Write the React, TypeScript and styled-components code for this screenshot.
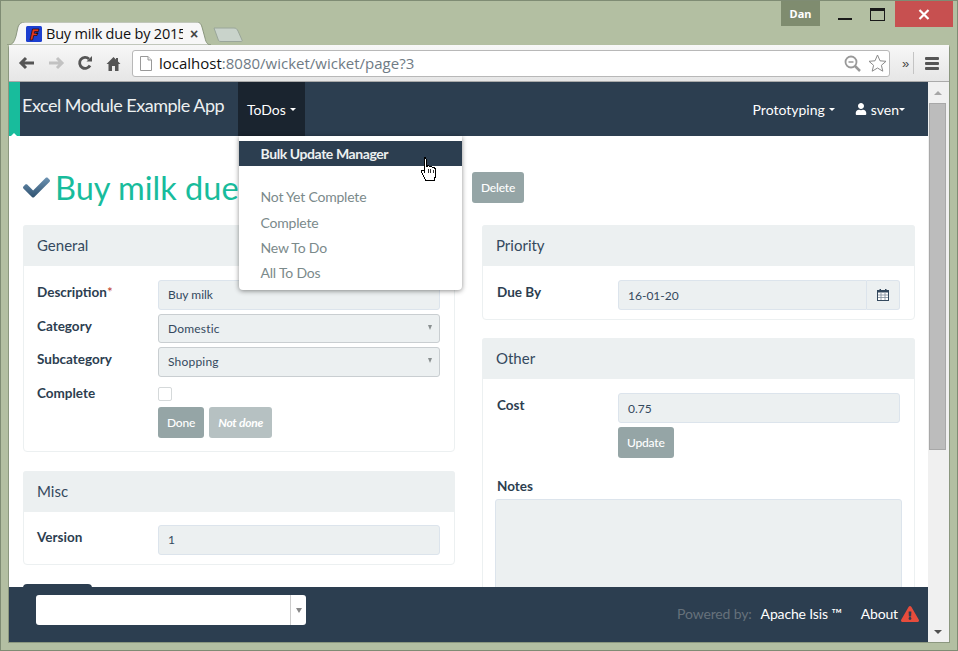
import React from 'react'
import styled, { createGlobalStyle } from 'styled-components'
import { FaExclamationTriangle, FaUser } from 'react-icons/fa'

const Global = createGlobalStyle`
	html, body {
		margin: 0;
		padding: 0;
		background: #b3bfa2;
	}
	* {
		box-sizing: border-box;
	}
`

const Frame = styled.div`
	width: 958px;
	height: 651px;
	overflow: hidden;
	display: flex;
	flex-direction: column;
	background: #b3bfa2;
	border: 1px solid #7f8c74;
	font-family: Lato, 'Liberation Sans', sans-serif;
	color: #2c3e50;
`

const TitleBar = styled.div`
	height: 44px;
	flex: none;
	display: flex;
	justify-content: space-between;
	padding: 0 4px 0 5px;
`

const TabStrip = styled.div`
	display: flex;
	align-items: flex-end;
`

const Tab = styled.div`
	position: relative;
	width: 205px;
	height: 23px;
	display: flex;
	align-items: center;
	padding: 0 0 0 20px;
	font-size: 14.5px;
	letter-spacing: -0.2px;
	color: #111;
	font-family: 'Open Sans', Lato, sans-serif;
`

const TabShape = styled.svg`
	position: absolute;
	left: 0;
	top: 0;
`

const TabTitle = styled.span`
	position: relative;
	margin-left: 4px;
	width: 137px;
	overflow: hidden;
	white-space: nowrap;
`

const TabClose = styled.span`
	position: relative;
	margin-left: 7px;
	font-size: 14px;
	font-weight: 700;
	color: #444;
	font-family: 'Liberation Sans', sans-serif;
`

const NewTab = styled.svg`
	margin: 0 0 3px 2px;
`

const WindowControls = styled.div`
	display: flex;
	align-items: flex-start;
`

const UserBadge = styled.div`
	width: 39px;
	height: 25px;
	margin-right: 8px;
	background: #7f8c6f;
	color: #fff;
	font-size: 11px;
	font-weight: 700;
	font-family: 'Noto Sans', sans-serif;
	text-align: center;
	line-height: 25px;
`

const ControlButton = styled.div<{ $close?: boolean }>`
	width: ${(p) => (p.$close ? '58px' : '33px')};
	height: 26px;
	margin-left: ${(p) => (p.$close ? '1px' : '0')};
	display: flex;
	align-items: center;
	justify-content: center;
	background: ${(p) => (p.$close ? '#c75050' : 'transparent')};
`

const Browser = styled.div`
	flex: 1;
	min-height: 0;
	margin: 0 7px 7px;
	display: flex;
	flex-direction: column;
	border: 1px solid #8b977f;
	border-top: none;
	border-radius: 3px 3px 0 0;
	background: #fff;
`

const Toolbar = styled.div`
	height: 37px;
	flex: none;
	display: flex;
	align-items: center;
	padding: 0 9px 0 9px;
	background: linear-gradient(#f7f7f7, #e6e6e6);
	border-bottom: 1px solid #aaa;
`

const NavIcon = styled.svg<{ $gap: number }>`
	flex: none;
	margin-right: ${(p) => p.$gap}px;
`

const Omnibox = styled.div`
	width: 758px;
	height: 27px;
	display: flex;
	align-items: center;
	gap: 7px;
	padding: 0 2px 0 7px;
	background: #fff;
	border: 1px solid #b8b8b8;
	border-radius: 3px;
	font-family: 'Open Sans', Lato, sans-serif;
	font-size: 15px;
	color: #111;
`

const UrlRest = styled.span`
	color: #6f7b85;
`

const Url = styled.div`
	flex: 1;
	white-space: nowrap;
`

const Chevrons = styled.span`
	margin-left: 12px;
	width: 9px;
	font-size: 13px;
	color: #444;
	font-family: 'Liberation Sans', sans-serif;
`

const ToolbarRule = styled.span`
	width: 1px;
	height: 22px;
	margin-left: 2px;
	background: #c4c4c4;
`

const MenuBars = styled.div`
	margin-left: 11px;
	width: 14px;
	height: 13px;
	display: flex;
	flex-direction: column;
	justify-content: space-between;
	span {
		height: 3px;
		background: #555;
		border-radius: 1px;
	}
`

const Viewport = styled.div`
	flex: 1;
	min-height: 0;
	display: flex;
`

const Page = styled.div`
	position: relative;
	flex: 1;
	min-width: 0;
	display: flex;
	flex-direction: column;
`

const Navbar = styled.div`
	height: 54px;
	flex: none;
	display: flex;
	align-items: stretch;
	background: #2c3e50;
	color: #fff;
`

const AccentStrip = styled.div`
	position: relative;
	width: 11px;
	flex: none;
	background: #18bc9c;
	&::after {
		content: '';
		position: absolute;
		left: 2px;
		bottom: 0;
		border-left: 3.5px solid transparent;
		border-right: 3.5px solid transparent;
		border-bottom: 3.5px solid #fff;
	}
`

const Brand = styled.div`
	width: 218px;
	flex: none;
	padding: 0 0 0 2px;
	font-size: 18px;
	letter-spacing: -0.5px;
	line-height: 47px;
	white-space: nowrap;
	color: #ecf0f1;
`

const NavItem = styled.div<{ $active?: boolean }>`
	display: flex;
	align-items: center;
	gap: 4px;
	padding: 0 9px;
	font-size: 14px;
	background: ${(p) => (p.$active ? '#1a242f' : 'transparent')};
`

const Caret = styled.span<{ $tight?: boolean }>`
	width: 0;
	height: 0;
	margin-left: ${(p) => (p.$tight ? '-4px' : '0')};
	border-top: 3.5px solid #fff;
	border-left: 3.5px solid transparent;
	border-right: 3.5px solid transparent;
`

const NavRight = styled.div`
	margin-left: auto;
	display: flex;
	padding-right: 14px;
	gap: 2px;
`

const Dropdown = styled.div`
	position: absolute;
	left: 230px;
	top: 54px;
	width: 223px;
	height: 154px;
	padding-top: 5px;
	background: #fff;
	border-radius: 0 0 4px 4px;
	box-shadow: 0 1px 5px rgba(0, 0, 0, 0.45);
	font-size: 14px;
	z-index: 3;
`

const DropItem = styled.div<{ $active?: boolean }>`
	height: 25.3px;
	line-height: 25px;
	padding-left: 21.5px;
	font-weight: ${(p) => (p.$active ? 700 : 400)};
	letter-spacing: ${(p) => (p.$active ? '-0.42px' : '-0.2px')};
	background: ${(p) => (p.$active ? '#2c3e50' : 'transparent')};
	color: ${(p) => (p.$active ? '#ecf0f1' : '#7b8a8b')};
`

const DropDivider = styled.div`
	height: 18px;
`

const Pointer = styled.svg`
	position: absolute;
	left: 412px;
	top: 75px;
	z-index: 4;
`

const Main = styled.div`
	flex: 1;
	min-height: 0;
	overflow: hidden;
	padding: 36px 13px 0 14px;
`

const TitleRow = styled.div`
	height: 31px;
	margin-bottom: 22px;
	display: flex;
	align-items: center;
`

const Title = styled.h1`
	margin: 0 12px 0 5px;
	width: 405px;
	overflow: hidden;
	font-size: 32.5px;
	font-weight: 400;
	line-height: 36px;
	white-space: nowrap;
	color: #18bc9c;
`

const Button = styled.div<{ $muted?: boolean; $italic?: boolean }>`
	height: 31px;
	display: inline-flex;
	align-items: center;
	padding: 0 9px;
	border-radius: 3px;
	font-size: 12px;
	letter-spacing: -0.2px;
	font-weight: ${(p) => (p.$italic ? 700 : 500)};
	font-style: ${(p) => (p.$italic ? 'italic' : 'normal')};
	color: #fff;
	background: ${(p) => (p.$muted ? '#b6c1c2' : '#95a5a6')};
`

const Columns = styled.div`
	display: grid;
	grid-template-columns: 432px 433px;
	column-gap: 27px;
	align-items: start;
`

const Column = styled.div`
	display: flex;
	flex-direction: column;
`

const Panel = styled.div<{ $gap: number }>`
	margin-bottom: ${(p) => p.$gap}px;
	border: 1px solid #ecf0f1;
	border-radius: 4px;
`

const PanelHeading = styled.div`
	height: 41px;
	margin: -1px -1px 0;
	padding-left: 14px;
	background: #ecf0f1;
	border-radius: 3px 3px 0 0;
	font-size: 15px;
	line-height: 41px;
	color: #34495e;
`

const PanelBody = styled.div<{ $right?: boolean; $top?: number; $bottom?: number }>`
	padding: ${(p) => p.$top ?? 14}px 14px ${(p) => p.$bottom ?? 9}px
		${(p) => (p.$right ? 14 : 13)}px;
	display: flex;
	flex-direction: column;
	gap: 4px;
`

const Row = styled.div`
	display: grid;
	grid-template-columns: 121px 1fr;
`

const Label = styled.div`
	padding-top: 2px;
	font-size: 13.5px;
	font-weight: 700;
	line-height: 20px;
	color: #2c3e50;
`

const Required = styled.span`
	color: #c0392b;
	font-weight: 400;
`

const Input = styled.div<{ $height?: number; $addon?: boolean }>`
	height: ${(p) => p.$height ?? 30}px;
	display: flex;
	align-items: center;
	padding-left: 9px;
	background: #ecf0f1;
	border: 1px solid #dce4ec;
	border-radius: ${(p) => (p.$addon ? '3px 0 0 3px' : '3px')};
	font-size: 12px;
	color: #34495e;
`

const Select = styled(Input)`
	position: relative;
	border-color: #c9ced1;
	letter-spacing: 0.2px;
	&::after {
		content: '';
		position: absolute;
		right: 7px;
		top: 10px;
		border-top: 5px solid #8a9091;
		border-left: 2.5px solid transparent;
		border-right: 2.5px solid transparent;
	}
`

const InputGroup = styled.div`
	display: grid;
	grid-template-columns: 1fr 33px;
`

const Addon = styled.div`
	display: flex;
	align-items: center;
	justify-content: center;
	background: #ecf0f1;
	border: 1px solid #dce4ec;
	border-left: none;
	border-radius: 0 3px 3px 0;
`

const Checkbox = styled.div`
	width: 14px;
	height: 14px;
	margin-top: 6.5px;
	border: 1px solid #d5d9da;
	border-radius: 2px;
	background: #fff;
`

const ButtonRow = styled.div`
	display: flex;
	gap: 5px;
	margin-top: 5.5px;
`

const Stack = styled.div`
	display: flex;
	flex-direction: column;
`

const UpdateRow = styled.div`
	display: flex;
	margin-top: 4px;
`

const NotesLabel = styled(Label)`
	margin-top: 14px;
	padding-top: 0;
`

const Notes = styled.div`
	height: 140px;
	margin: 3px -2px 0 -2px;
	background: #ecf0f1;
	border: 1px solid #dce4ec;
	border-radius: 3px;
`

const HiddenTab = styled.div`
	width: 69px;
	height: 8px;
	background: #2c3e50;
	border-radius: 4px 4px 0 0;
`

const Footer = styled.div`
	height: 55px;
	flex: none;
	display: flex;
	align-items: flex-start;
	padding: 8px 9px 0 27px;
	background: #2c3e50;
	font-size: 14px;
	letter-spacing: -0.15px;
	color: #fff;
`

const FooterSelect = styled.div`
	width: 270px;
	height: 30px;
	display: flex;
	justify-content: flex-end;
	background: #fff;
	border-radius: 3px;
`

const SelectArrow = styled.div`
	width: 16px;
	display: flex;
	align-items: center;
	justify-content: center;
	border-left: 1px solid #ccc;
	&::after {
		content: '';
		border-top: 5px solid #888;
		border-left: 3px solid transparent;
		border-right: 3px solid transparent;
	}
`

const FooterLinks = styled.div`
	margin-left: auto;
	height: 37px;
	display: flex;
	align-items: center;
`

const Powered = styled.span`
	color: #66717b;
	margin-right: 9px;
`

const About = styled.span`
	margin-left: 19px;
	margin-right: 3px;
`

const Scrollbar = styled.div`
	width: 21px;
	flex: none;
	display: flex;
	flex-direction: column;
	align-items: center;
	padding: 0 3px 0 1px;
	background: #f0f0f0;
`

const ScrollArrow = styled.div<{ $down?: boolean }>`
	height: 21px;
	width: 100%;
	flex: none;
	display: flex;
	align-items: center;
	justify-content: center;
	margin-top: ${(p) => (p.$down ? 'auto' : '0')};
	&::after {
		content: '';
		border-left: 4px solid transparent;
		border-right: 4px solid transparent;
		${(p) =>
			p.$down ? 'border-top: 4px solid #505050;' : 'border-bottom: 4px solid #a6a6a6;'}
	}
`

const ScrollThumb = styled.div`
	width: 17px;
	height: 347px;
	background: #bcbcbc;
	border: 1px solid #a8a8a8;
`

const FaviconSvg = styled.svg`
	position: relative;
	flex: none;
`

const CHECK_PATH =
	'M173.898 439.404l-166.4-166.4c-9.997-9.997-9.997-26.206 0-36.204l36.203-36.204c9.997-9.998 26.207-9.998 36.204 0L192 312.69 432.095 72.596c9.997-9.997 26.207-9.997 36.204 0l36.203 36.204c9.997 9.997 9.997 26.206 0 36.204l-294.4 294.401c-9.998 9.997-26.207 9.997-36.204-.001z'

const CheckIcon = () => (
	<svg width="27" height="27" viewBox="0 0 512 512">
		<defs>
			<linearGradient id="check" x1="0" y1="0" x2="0" y2="1">
				<stop offset="0" stopColor="#6d93b3" />
				<stop offset="1" stopColor="#2f5270" />
			</linearGradient>
		</defs>
		<path d={CHECK_PATH} fill="url(#check)" />
	</svg>
)

const Favicon = () => (
	<FaviconSvg width="16" height="16" viewBox="0 0 16 16">
		<rect width="16" height="16" rx="1.5" fill="#1c3fd0" />
		<path d="M4 14 L6.5 3 H13 L12.4 5.5 H8.6 L8.2 7.2 H11.6 L11 9.5 H7.7 L6.6 14 Z" fill="#e2361d" stroke="#220a06" strokeWidth="0.7" />
		<rect x="10.2" y="6.6" width="2" height="1.4" fill="#111" />
	</FaviconSvg>
)

const CalendarIcon = () => (
	<svg width="12" height="12" viewBox="0 0 12 12">
		<rect x="0.5" y="1.5" width="11" height="10" fill="#fff" stroke="#34495e" />
		<rect x="0.5" y="1.5" width="11" height="2" fill="#34495e" />
		<path d="M4 4v7M8 4v7M1 6h10M1 8.5h10" stroke="#7d8b99" strokeWidth="0.8" />
		<rect x="2.5" y="0" width="1.5" height="3" fill="#34495e" />
		<rect x="8" y="0" width="1.5" height="3" fill="#34495e" />
	</svg>
)

const App = () => (
	<>
		<Global />
		<Frame>
			<TitleBar>
				<TabStrip>
					<Tab>
						<TabShape width="205" height="23" viewBox="0 0 205 23">
							<path d="M1 23 C6 23 8 21 10 14 L12 5 C13 2 15 0 19 0 H190 C194 0 195 2 196 5 L199 16 C200 21 202 23 205 23 Z" fill="#f7f7f7" stroke="#8b977f" />
						</TabShape>
						<Favicon />
						<TabTitle>Buy milk due by 2015</TabTitle>
						<TabClose>×</TabClose>
					</Tab>
					<NewTab width="31" height="15" viewBox="0 0 31 15">
						<path d="M1 1 H21 C23 1 24 2 25 4 L29 13 C29.500 14 29 14.500 28 14.500 H8 C6 14.500 5.500 14 5 12 Z" fill="#c9d3cb" stroke="#9aa69a" />
					</NewTab>
				</TabStrip>
				<WindowControls>
					<UserBadge>Dan</UserBadge>
					<ControlButton>
						<svg width="14" height="14" viewBox="0 0 14 14">
							<rect x="0" y="11" width="14" height="2" fill="#1a1a1a" />
						</svg>
					</ControlButton>
					<ControlButton>
						<svg width="15" height="13" viewBox="0 0 15 13">
							<rect x="0.5" y="0.5" width="14" height="12" fill="none" stroke="#1a1a1a" />
							<rect x="0" y="0" width="15" height="3" fill="#1a1a1a" />
						</svg>
					</ControlButton>
					<ControlButton $close>
						<svg width="12" height="11" viewBox="0 0 12 11">
							<path d="M1.500 1 L10.500 10 M10.500 1 L1.500 10" stroke="#fff" strokeWidth="2.200" />
						</svg>
					</ControlButton>
				</WindowControls>
			</TitleBar>
			<Browser>
				<Toolbar>
					<NavIcon $gap={12.5} width="17" height="14" viewBox="0 0 17 14">
						<path d="M16 7 H4 M8 2 L3 7 L8 12" fill="none" stroke="#555" strokeWidth="3" />
					</NavIcon>
					<NavIcon $gap={12.5} width="17" height="14" viewBox="0 0 17 14">
						<path d="M1 7 H13 M9 2 L14 7 L9 12" fill="none" stroke="#c2c2c2" strokeWidth="3" />
					</NavIcon>
					<NavIcon $gap={13} width="16" height="16" viewBox="0 0 16 16">
						<path d="M13 10.500 A5.500 5.500 0 1 1 12 4" fill="none" stroke="#555" strokeWidth="2.800" />
						<path d="M9.500 6.500 H15 V1 Z" fill="#555" />
					</NavIcon>
					<NavIcon $gap={11} width="15" height="15" viewBox="0 0 15 15">
						<path d="M7.500 1 L0.500 8 H2.500 V15 H6 V10 H9 V15 H12.500 V8 H14.500 L12 5.500 V2 H10 V3.500 Z" fill="#555" />
					</NavIcon>
					<Omnibox>
						<svg width="12" height="15" viewBox="0 0 12 15">
							<path d="M0.500 0.500 H8 L11.500 4 V14.500 H0.500 Z" fill="#fff" stroke="#999" />
							<path d="M8 0.500 V4 H11.500" fill="#eee" stroke="#999" />
						</svg>
						<Url>
							localhost<UrlRest>:8080/wicket/wicket/page?3</UrlRest>
						</Url>
						<svg width="17" height="17" viewBox="0 0 17 17">
							<circle cx="7" cy="7" r="5.500" fill="none" stroke="#999" strokeWidth="1.800" />
							<path d="M4.500 7 H9.500" stroke="#999" strokeWidth="1.500" />
							<path d="M11 11 L16 16" stroke="#999" strokeWidth="2.500" />
						</svg>
						<svg width="19" height="18" viewBox="0 0 19 18">
							<path d="M9.500 1 L12 6.800 L18 7.300 L13.400 11.300 L14.800 17.200 L9.500 14 L4.200 17.200 L5.600 11.300 L1 7.300 L7 6.800 Z" fill="#fff" stroke="#8a8a8a" />
						</svg>
					</Omnibox>
					<Chevrons>»</Chevrons>
					<ToolbarRule />
					<MenuBars>
						<span />
						<span />
						<span />
					</MenuBars>
				</Toolbar>
				<Viewport>
					<Page>
						<Navbar>
							<AccentStrip />
							<Brand>Excel Module Example App</Brand>
							<NavItem $active>
								ToDos <Caret />
							</NavItem>
							<NavRight>
								<NavItem>
									Prototyping <Caret />
								</NavItem>
								<NavItem>
									<FaUser size={12} /> <span>sven</span>
									<Caret $tight />
								</NavItem>
							</NavRight>
						</Navbar>
						<Dropdown>
							<DropItem $active>Bulk Update Manager</DropItem>
							<DropDivider />
							<DropItem>Not Yet Complete</DropItem>
							<DropItem>Complete</DropItem>
							<DropItem>New To Do</DropItem>
							<DropItem>All To Dos</DropItem>
						</Dropdown>
						<Pointer width="16" height="25" viewBox="0 0 16 25" shapeRendering="crispEdges">
							<path d="M3 1.500 C3 0.500 5 0.500 5 1.500 V10 L6.500 9 C7 8.500 8.500 8.500 8.500 10 C9 9 11 9 11 10.500 C11.500 10 13.500 10 13.500 11.500 L14.500 12 V19 L13 23.500 H5 L1 16 L0.500 14 C0.500 13 2 12.500 3 14 Z" fill="#fff" stroke="#000" strokeWidth="1" />
							<path d="M7 12 V16 M9.500 12 V16 M12 12.500 V16" stroke="#000" strokeWidth="0.800" />
						</Pointer>
						<Main>
							<TitleRow>
								<CheckIcon />
								<Title>Buy milk due by 2016-01-20</Title>
								<Button>Delete</Button>
							</TitleRow>
							<Columns>
								<Column>
									<Panel $gap={19}>
										<PanelHeading>General</PanelHeading>
										<PanelBody $bottom={13}>
											<Row>
												<Label>
													Description<Required>*</Required>
												</Label>
												<Input $height={29.5}>Buy milk</Input>
											</Row>
											<Row>
												<Label>Category</Label>
												<Select $height={29.5}>Domestic</Select>
											</Row>
											<Row>
												<Label>Subcategory</Label>
												<Select $height={29.5}>Shopping</Select>
											</Row>
											<Row>
												<Label>Complete</Label>
												<Stack>
													<Checkbox />
													<ButtonRow>
														<Button>Done</Button>
														<Button $muted $italic>
															Not done
														</Button>
													</ButtonRow>
												</Stack>
											</Row>
										</PanelBody>
									</Panel>
									<Panel $gap={19}>
										<PanelHeading>Misc</PanelHeading>
										<PanelBody $top={13}>
											<Row>
												<Label>Version</Label>
												<Input>1</Input>
											</Row>
										</PanelBody>
									</Panel>
									<HiddenTab />
								</Column>
								<Column>
									<Panel $gap={18}>
										<PanelHeading>Priority</PanelHeading>
										<PanelBody $right>
											<Row>
												<Label>Due By</Label>
												<InputGroup>
													<Input $addon>16-01-20</Input>
													<Addon>
														<CalendarIcon />
													</Addon>
												</InputGroup>
											</Row>
										</PanelBody>
									</Panel>
									<Panel $gap={0}>
										<PanelHeading>Other</PanelHeading>
										<PanelBody $right>
											<Row>
												<Label>Cost</Label>
												<Stack>
													<Input>0.75</Input>
													<UpdateRow>
														<Button>Update</Button>
													</UpdateRow>
												</Stack>
											</Row>
											<Stack>
												<NotesLabel>Notes</NotesLabel>
												<Notes />
											</Stack>
										</PanelBody>
									</Panel>
								</Column>
							</Columns>
						</Main>
						<Footer>
							<FooterSelect>
								<SelectArrow />
							</FooterSelect>
							<FooterLinks>
								<Powered>Powered by:</Powered>
								<span>Apache Isis ™</span>
								<About>About</About>
								<FaExclamationTriangle size={18} color="#e74c3c" />
							</FooterLinks>
						</Footer>
					</Page>
					<Scrollbar>
						<ScrollArrow />
						<ScrollThumb />
						<ScrollArrow $down />
					</Scrollbar>
				</Viewport>
			</Browser>
		</Frame>
	</>
)

export default App
